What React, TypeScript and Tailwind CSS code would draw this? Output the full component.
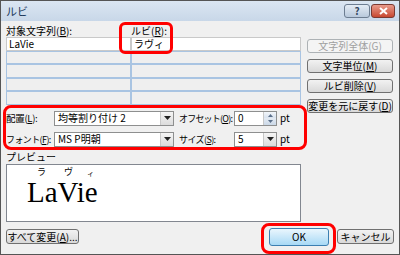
import React from "react";

const font = { fontFamily: '"Noto Sans CJK JP", "Liberation Sans", sans-serif' };

const Btn = ({ children, disabled, className = "" }: any) => (
  <div
    className={`flex items-center justify-center rounded-[3px] border text-[10px] leading-none ${
      disabled
        ? "border-[#adb2b5] bg-[#f4f4f4] text-[#a0a0a0]"
        : "border-[#707070] bg-gradient-to-b from-[#f2f2f2] to-[#d9d9d9] text-black"
    } ${className}`}
  >
    {children}
  </div>
);

const Arrow = () => (
  <div className="flex h-full w-[13px] items-center justify-center border-l border-[#c8c8c8] bg-gradient-to-b from-[#f5f5f5] to-[#dcdcdc]">
    <svg width="7" height="4" viewBox="0 0 7 4">
      <path d="M0 0h7L3.5 4z" fill="#222" />
    </svg>
  </div>
);

const Cell = ({ white, children }: any) => (
  <div
    className={`h-[13.6px] border px-[2px] text-[10px] leading-[12px] ${
      white ? "border-[#c9c9c9] bg-white" : "border-[#a9c4e2] bg-[#efefef]"
    }`}
  >
    {children}
  </div>
);

export default function App() {
  return (
    <div
      className="relative h-[255px] w-[400px] overflow-hidden whitespace-nowrap border border-[#555] bg-[#f0f0f0] text-black"
      style={font}
    >
      {/* title bar */}
      <div className="flex h-[20px] items-center justify-between bg-gradient-to-b from-[#dbe6f2] to-[#c8d7e8] pl-[5px] pr-[4px]">
        <span className="text-[11px] text-[#1e395b]">ルビ</span>
        <div className="flex gap-[1px]">
          <div className="flex h-[14px] w-[26px] items-center justify-center rounded-[3px] border border-[#6d7d91] bg-gradient-to-b from-[#e4ecf5] to-[#b9c9dc] text-[10px] font-bold leading-none text-[#33485f]">
            ?
          </div>
          <div className="flex h-[14px] w-[24px] items-center justify-center rounded-[3px] border border-[#7a3a32] bg-gradient-to-b from-[#e89a8c] to-[#c7472f]">
            <svg width="9" height="8" viewBox="0 0 9 8">
              <path d="M1 1l7 6M8 1L1 7" stroke="#fff" strokeWidth="2" />
            </svg>
          </div>
        </div>
      </div>

      <div className="px-[5px]">
        <div className="flex items-start">
          {/* left column */}
          <div className="w-[295px]">
            <div className="flex h-[16px] items-end text-[10px] leading-[13px]">
              <span className="w-[125px]">対象文字列(<u>B</u>):</span>
              <span>ルビ(<u>R</u>):</span>
            </div>
            <div className="grid grid-cols-[125px_170px]">
              <Cell white>LaVie</Cell>
              <Cell white>ラヴィ</Cell>
              {[0, 1, 2, 3].map((i) => (
                <React.Fragment key={i}>
                  <Cell />
                  <Cell />
                </React.Fragment>
              ))}
            </div>

            {/* options */}
            <div className="mt-[6px] flex flex-col gap-[6px] text-[10px] leading-none">
              <div className="flex h-[15px] items-center">
                <span className="w-[48px] text-[9.5px] tracking-[-0.3px]">配置(<u>L</u>):</span>
                <div className="flex h-full w-[120px] items-center border border-[#8e8f8f] bg-white">
                  <span className="flex-1 pl-[3px]">均等割り付け 2</span>
                  <Arrow />
                </div>
                <span className="ml-[5px] w-[55px] text-[9px] tracking-[-0.8px]">オフセット(<u>O</u>):</span>
                <div className="flex h-full w-[43px] items-center border border-[#8e8f8f] bg-white">
                  <span className="flex-1 pl-[3px]">0</span>
                  <div className="flex h-full w-[13px] flex-col border-l border-[#c8c8c8]">
                    <div className="flex flex-1 items-center justify-center bg-gradient-to-b from-[#f3f6fa] to-[#d8e2ee]">
                      <svg width="5" height="3" viewBox="0 0 5 3">
                        <path d="M2.5 0L5 3H0z" fill="#5a6f8a" />
                      </svg>
                    </div>
                    <div className="flex flex-1 items-center justify-center bg-gradient-to-b from-[#e4ebf3] to-[#cbd8e7]">
                      <svg width="5" height="3" viewBox="0 0 5 3">
                        <path d="M0 0h5L2.5 3z" fill="#5a6f8a" />
                      </svg>
                    </div>
                  </div>
                </div>
                <span className="ml-[3px]">pt</span>
              </div>
              <div className="flex h-[15px] items-center">
                <span className="w-[48px] text-[9px] tracking-[-0.6px]">フォント(<u>F</u>):</span>
                <div className="flex h-full w-[120px] items-center border border-[#8e8f8f] bg-white">
                  <span className="flex-1 pl-[3px]">MS P明朝</span>
                  <Arrow />
                </div>
                <span className="ml-[5px] w-[55px] text-[9px] tracking-[-0.6px]">サイズ(<u>S</u>):</span>
                <div className="flex h-full w-[43px] items-center border border-[#8e8f8f] bg-white">
                  <span className="flex-1 pl-[3px]">5</span>
                  <Arrow />
                </div>
                <span className="ml-[3px]">pt</span>
              </div>
            </div>

            {/* preview */}
            <div className="mt-[3px] text-[10px] leading-[13px]">プレビュー</div>
            <div className="mt-[1px] h-[58px] w-[295px] border border-[#828790] bg-white pl-[20px]">
              <div className="flex items-end pt-[2px] text-[9px] leading-[10px]">
                <span className="ml-[10px]">ラ</span>
                <span className="ml-[18px]">ヴ</span>
                <span className="ml-[14px] text-[7px] leading-[8px]">ィ</span>
              </div>
              <div
                className="mt-[2px] text-[29px] leading-[27px]"
                style={{ fontFamily: '"Liberation Serif", serif' }}
              >
                LaVie
              </div>
            </div>
          </div>

          {/* right buttons */}
          <div className="ml-[6px] mt-[18px] flex w-[86px] flex-col gap-[6px]">
            <Btn disabled className="h-[14px]">文字列全体(G)</Btn>
            <Btn className="h-[14px]">文字単位(<u>M</u>)</Btn>
            <Btn className="h-[14px]">ルビ削除(<u>V</u>)</Btn>
            <Btn className="h-[14px]">変更を元に戻す(<u>D</u>)</Btn>
          </div>
        </div>

        {/* bottom buttons */}
        <div className="mt-[6px] flex items-center">
          <Btn className="h-[15px] w-[73px]">すべて変更(<u>A</u>)...</Btn>
          <div className="flex-1" />
          <div className="flex h-[18px] w-[60px] items-center justify-center rounded-[3px] border border-[#3c7fb1] bg-gradient-to-b from-[#eaf6fd] to-[#a7d9f5] text-[10px] leading-none">
            OK
          </div>
          <Btn className="ml-[8px] h-[15px] w-[57px]">キャンセル</Btn>
        </div>
      </div>

      {/* red annotation boxes */}
      <div className="absolute left-[118px] top-[21px] h-[32px] w-[54px] rounded-[6px] border-[3px] border-[#ff0000]" />
      <div className="absolute left-[2px] top-[104px] h-[45px] w-[304px] rounded-[8px] border-[3px] border-[#ff0000]" />
      <div className="absolute left-[260px] top-[222px] h-[31px] w-[75px] rounded-[8px] border-[3px] border-[#ff0000]" />
    </div>
  );
}
